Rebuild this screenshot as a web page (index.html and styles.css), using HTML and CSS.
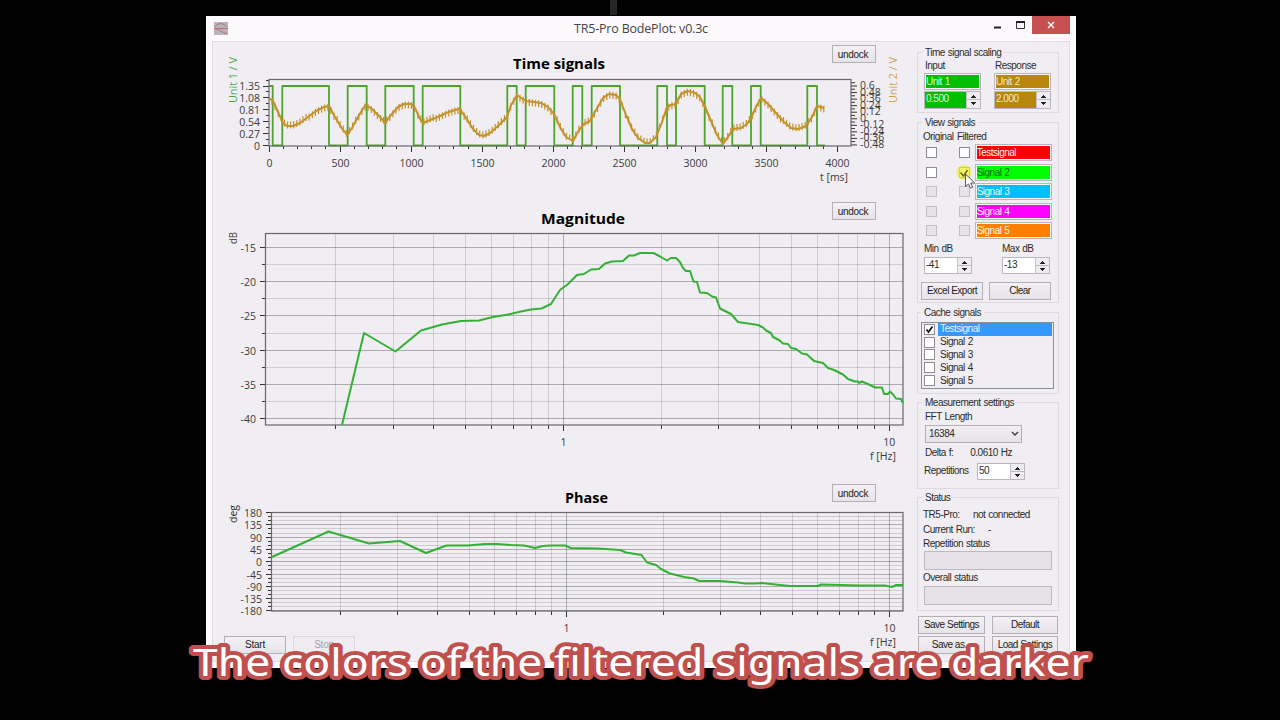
FILE: index.html
```html
<!DOCTYPE html>
<html lang="en">
<head>
    <meta charset="UTF-8">
    <title>TR5-Pro BodePlot: v0.3c</title>
    <link rel="stylesheet" href="styles.css">
</head>
<body>
    <div class="window">
        <header class="titlebar">
            <svg class="app-icon" width="14" height="13" viewBox="0 0 14 13">
                <rect width="14" height="13" fill="#b9b4b8"/>
                <path d="M0 6.5H14M1 5C4 .5 9 .5 13 5M1 6.5C5 7 8 11 13 11.5" fill="none" stroke="#b5707c"/>
            </svg>
            <h1>TR5-Pro BodePlot: v0.3c</h1>
            <div class="win-buttons">
                <svg width="38" height="19" viewBox="0 0 38 19">
                    <path d="M0 11.5h7" stroke="#222" stroke-width="2"/>
                    <path d="M22.5 6v6.5h8V6" fill="none" stroke="#333"/>
                    <path d="M22 6h9" stroke="#222" stroke-width="2"/>
                </svg>
                <div class="close">
                    <svg width="8" height="8" viewBox="0 0 8 8"><path d="M1 1l6 6M7 1l-6 6" stroke="#fff" stroke-width="1.4"/></svg>
                </div>
            </div>
        </header>

        <main class="client">
            <div class="charts">
                <section class="panel panel-time">
                    <svg id="time" viewBox="213 42 700 155"></svg>
                    <button class="undock">undock</button>
                </section>
                <section class="panel panel-mag">
                    <svg id="mag" viewBox="213 197 700 283"></svg>
                    <button class="undock">undock</button>
                </section>
                <section class="panel panel-phase">
                    <svg id="phase" viewBox="213 480 700 156"></svg>
                    <button class="undock">undock</button>
                </section>
                <div class="run-buttons">
                    <button>Start</button>
                    <button disabled>Stop</button>
                </div>
            </div>

            <aside class="sidebar">
                <div class="group scaling">
                    <h2>Time signal scaling</h2>
                    <div class="scaling-grid">
                        <label>Input</label>
                        <label>Response</label>
                        <div class="field green">Unit 1</div>
                        <div class="field gold">Unit 2</div>
                        <div class="spin green"><span>0.500</span><i></i></div>
                        <div class="spin gold"><span>2.000</span><i></i></div>
                    </div>
                </div>

                <div class="group view">
                    <h2>View signals</h2>
                    <div class="view-head"><span>Original</span><span>Filtered</span></div>
                    <div class="signal"><b class="check"></b><b class="check"></b><div class="field red">Testsignal</div></div>
                    <div class="signal"><b class="check"></b><b class="check"></b><div class="field lime">Signal 2</div></div>
                    <div class="signal"><b class="check off"></b><b class="check off"></b><div class="field blue">Signal 3</div></div>
                    <div class="signal"><b class="check off"></b><b class="check off"></b><div class="field magenta">Signal 4</div></div>
                    <div class="signal"><b class="check off"></b><b class="check off"></b><div class="field orange">Signal 5</div></div>
                    <div class="db-range">
                        <label>Min dB</label>
                        <label>Max dB</label>
                        <div class="spin"><span>-41</span><i></i></div>
                        <div class="spin"><span>-13</span><i></i></div>
                    </div>
                    <div class="view-buttons">
                        <button>Excel Export</button>
                        <button>Clear</button>
                    </div>
                </div>

                <div class="group cache">
                    <h2>Cache signals</h2>
                    <ul>
                        <li class="selected"><b class="check"><svg width="9" height="9" viewBox="0 0 9 9"><path d="M1.5 4.5l2 2.5 4-5.5" fill="none" stroke="#111" stroke-width="1.7"/></svg></b><span>Testsignal</span></li>
                        <li><b class="check"></b><span>Signal 2</span></li>
                        <li><b class="check"></b><span>Signal 3</span></li>
                        <li><b class="check"></b><span>Signal 4</span></li>
                        <li><b class="check"></b><span>Signal 5</span></li>
                    </ul>
                </div>

                <div class="group settings">
                    <h2>Measurement settings</h2>
                    <label>FFT Length</label>
                    <div class="select">16384
                        <svg width="8" height="6" viewBox="0 0 8 6"><path d="M1 1l3 3 3-3" fill="none" stroke="#444" stroke-width="1.5"/></svg>
                    </div>
                    <div class="row delta"><span>Delta f:</span><span>0.0610 Hz</span></div>
                    <div class="row reps"><span>Repetitions</span><div class="spin"><span>50</span><i></i></div></div>
                </div>

                <div class="group status">
                    <h2>Status</h2>
                    <div class="row tr5"><span>TR5-Pro:</span><span>not connected</span></div>
                    <div class="row current"><span>Current Run:</span><span>-</span></div>
                    <div class="row repetition">Repetition status</div>
                    <div class="progress"></div>
                    <div class="row overall">Overall status</div>
                    <div class="progress"></div>
                </div>

                <div class="file-buttons">
                    <button>Save Settings</button>
                    <button>Default</button>
                    <button>Save as...</button>
                    <button>Load Settings</button>
                </div>
            </aside>
        </main>
    </div>

    <div class="stub"></div>

    <svg class="pointer" width="30" height="30" viewBox="0 0 30 30">
        <circle cx="9" cy="8.500" r="7.5" fill="#f0ee30" fill-opacity=".7"/>
        <path d="M5.5 8.500l3 3.5 4-6" fill="none" stroke="#6f6a18" stroke-width="1.5"/>
        <path d="M10.500 10v12.500l3-2.600 2 4.300 2.200-1-2-4.200h4z" fill="#fff" stroke="#555"/>
    </svg>

    <svg class="caption" width="940" height="60" viewBox="170 640 940 60">
        <text x="193" y="676" textLength="896" lengthAdjust="spacingAndGlyphs">The colors of the filtered signals are darker</text>
    </svg>

    <script src="charts.js"></script>
</body>
</html>
```

FILE: styles.css
```css
* { box-sizing: border-box; }
body {
    margin: 0;
    height: 720px;
    overflow: hidden;
    background: #000;
    font: 10px/12px "Liberation Sans", Arial, sans-serif;
    letter-spacing: -0.25px;
    color: #2c2c2c;
}
h1, h2, ul { margin: 0; padding: 0; font-size: inherit; font-weight: normal; }

.window {
    width: 870px;
    height: 652px;
    margin: 16px 0 0 206px;
    padding: 0 6px 6px;
    background: #fdfafe;
}
.titlebar {
    display: grid;
    grid-template-columns: 110px 1fr 110px;
    height: 25px;
}
.app-icon { margin: 6px 0 0 2px; }
.titlebar h1 {
    padding-top: 4px;
    text-align: center;
    font: 12.500px/18px "Open Sans", sans-serif;
    letter-spacing: -0.2px;
    color: #444;
}
.win-buttons { display: flex; justify-content: flex-end; }
.close {
    display: flex;
    align-items: center;
    justify-content: center;
    width: 38px;
    height: 18px;
    background: #c75050;
}

.client {
    display: flex;
    height: 621px;
    background: #f0eef2;
    border: 1px solid #dfdce2;
}
.charts { width: 700px; }
.panel { display: grid; }
.panel > * { grid-area: 1 / 1; }
.panel > svg { display: block; width: 700px; overflow: visible; }
.panel-time > svg { height: 155px; }
.panel-mag > svg { height: 283px; }
.panel-phase > svg { height: 156px; }
.panel .undock {
    justify-self: end;
    width: 44px;
    height: 18px;
    margin: 3px 37px 0 0;
    padding: 1px 2px 0 0;
}
.panel-mag .undock { margin-top: 5px; }
.panel-phase .undock { margin-top: 4px; }

button {
    padding: 0;
    height: 18px;
    font: inherit;
    letter-spacing: inherit;
    color: #222;
    background: linear-gradient(#f3f1f4, #e6e4e8);
    border: 1px solid #b2b0b4;
}
button:disabled { color: #a5a3a7; background: #eeecf0; border-color: #dad8dc; }
.run-buttons { display: flex; gap: 7px; padding-left: 11px; }
.run-buttons button { width: 62px; }

/* chart parts */
svg text { font-family: "Open Sans", sans-serif; letter-spacing: 0; }
.frame { fill: none; stroke: #6a686d; stroke-width: 1.2; }
.tick { fill: none; stroke: #333; }
.grid { fill: none; stroke: #555; stroke-opacity: .22; }
.grid-major { fill: none; stroke: #444; stroke-opacity: .4; }
.lbl { font-size: 10.500px; fill: #3c3c3c; }
.title { font-size: 15px; font-weight: bold; fill: #000; }
.trace { fill: none; stroke: #35b036; stroke-width: 2; stroke-linejoin: round; }
.trace.square { stroke: #4ea32c; stroke-width: 1.8; }
.trace.response { stroke: #c3922a; stroke-width: 2; }
.trace.noise { stroke: #c3922a; stroke-width: 1.2; }

/* sidebar */
.sidebar { width: 142px; margin-left: 4px; padding-top: 10px; letter-spacing: -0.5px; word-spacing: 0.6px; }
.group {
    height: 61px;
    margin-bottom: 9px;
    padding: 0 6px;
    border: 1px solid #dcdadf;
}
.group h2 {
    width: max-content;
    margin: -6px 0 0 -2px;
    padding: 0 3px;
    background: #f0eef2;
}
.scaling-grid {
    display: grid;
    grid-template-columns: 57px 57px;
    column-gap: 13px;
    row-gap: 1px;
    padding-top: 1px;
}
.scaling-grid label { padding-left: 1px; }
.field {
    height: 17px;
    padding-left: 1px;
    line-height: 15px;
    color: #f2f5e8;
    border: 1px solid #b9b7bb;
    outline: 1px solid #f8f7f9;
    outline-offset: -2px;
}
.spin {
    display: flex;
    width: 57px;
    height: 17px;
    background: #fff;
    border: 1px solid #b9b7bb;
}
.spin span { flex: 1; padding-left: 1px; line-height: 14px; }
.spin i {
    width: 14px;
    border-left: 1px solid #c4c2c6;
    background:
        conic-gradient(from 135deg at 50% 0, transparent 0) 0 0 / 0 0 no-repeat,
        conic-gradient(from 135deg at 50% 0, #222 90deg, transparent 0) 4px 3px / 5px 3px no-repeat,
        conic-gradient(from -45deg at 50% 100%, #222 90deg, transparent 0) 4px 10px / 5px 3px no-repeat,
        linear-gradient(#efedf1 7px, #bbb 7px, #bbb 8px, #efedf1 8px);
}
.field.green, .spin.green { background-color: #00bf00; color: #dff5d8; }
.field.gold, .spin.gold { background-color: #b8860b; color: #f3e8cc; }
.scaling .spin { height: 18px; }
.red { background: #f00; }
.lime { background: #0f0; color: #1c6a1c; }
.blue { background: #00bfff; }
.magenta { background: #f0f; }
.orange { background: #ff8000; }

.view { height: 181px; }
.view-head { display: flex; gap: 4px; padding-top: 2px; margin-left: -1px; }
.view-head span:first-child { width: 30px; }
.signal { display: flex; align-items: center; height: 19.500px; padding-left: 2px; }
.signal .check { margin-right: 22px; }
.signal .check + .check { margin-right: 5px; }
.signal .field { width: 79px; }
.check {
    width: 11px;
    height: 11px;
    background: #fff;
    border: 1px solid #8e8c90;
}
.check.off { background: #e6e4e8; border-color: #c2c0c4; }
.check svg { display: block; }
.db-range {
    display: grid;
    grid-template-columns: 48px 48px;
    column-gap: 30px;
    row-gap: 2px;
    margin-top: 2px;
}
.db-range .spin { width: 48px; }
.view-buttons { display: flex; gap: 6px; margin: 8px 0 0 -3px; }
.view-buttons button { width: 62px; }

.cache { height: 82px; margin-bottom: 8px; padding-left: 3px; }
.cache h2 { margin-left: 0; }
.cache ul {
    width: 133px;
    height: 67px;
    margin-top: 3px;
    padding: 0 1px;
    list-style: none;
    border: 1px solid #8b8d99;
}
.cache li { display: flex; align-items: center; height: 12.800px; padding-left: 1px; }
.cache li span { flex: 1; height: 12px; margin-left: 3px; padding-left: 2px; }
.cache .selected span { background: #3399ff; color: #e3f2ff; height: 13px; }

.settings { height: 87px; margin-bottom: 8px; padding-left: 7px; }
.settings h2 { margin-left: -3px; }
.settings label { display: block; margin-top: 2px; }
.select {
    display: flex;
    justify-content: space-between;
    align-items: center;
    width: 97px;
    height: 18px;
    margin-top: 2px;
    padding: 0 2px 0 3px;
    background: linear-gradient(#f1eff3, #e5e3e7);
    border: 1px solid #b2b0b4;
}
.row { display: flex; height: 14.500px; white-space: nowrap; }
.delta { gap: 17px; margin-top: 4px; height: 15px; }
.reps { height: 17px; margin-left: -1px; padding-top: 1px; }
.reps > span { width: 53px; padding-top: 2px; }
.reps .spin { flex: none; width: 48px; }

.status { height: 114px; margin-bottom: 5px; padding-left: 5px; }
.status h2 { margin-left: -1px; }
.tr5 { margin-top: 5px; }
.tr5 span:first-child { width: 50px; }
.current span:first-child { width: 65px; }
.repetition { height: 13px; }
.progress { width: 128px; height: 19px; margin-left: 1px; background: #e5e3e7; border: 1px solid #bcbabe; }
.overall { margin-top: 2px; height: 14px; }

.file-buttons { display: grid; grid-template-columns: 67px 66px; gap: 2px 7px; margin-left: 1px; }

/* things lying over the window */
.stub { position: absolute; left: 610px; top: 0; width: 7px; height: 15px; background: #262626; }
.pointer { position: absolute; left: 955px; top: 164px; }
.caption { position: absolute; left: 170px; top: 640px; }
.caption text {
    font-family: "Noto Sans", sans-serif;
    font-size: 38px;
    fill: #fff;
    stroke: #c0504d;
    stroke-width: 8px;
    stroke-linejoin: round;
    paint-order: stroke;
}
```

FILE: charts.js
```js
const NS = "http://www.w3.org/2000/svg";

function add(svg, tag, attrs, text) {
    const el = document.createElementNS(NS, tag);
    for (const k in attrs) el.setAttribute(k, attrs[k]);
    if (text !== undefined) el.textContent = text;
    svg.appendChild(el);
    return el;
}
const path = (svg, cls, d) => add(svg, "path", { class: cls, d });
const line = (svg, cls, pts) => add(svg, "polyline", { class: "trace " + cls, points: pts });

function label(svg, x, y, text, anchor, cls) {
    add(svg, "text", { x, y, class: cls || "lbl", "text-anchor": anchor || "middle" }, text);
}
function fitted(svg, x, y, text, width, cls) {
    add(svg, "text", { x, y, class: cls, textLength: width, lengthAdjust: "spacingAndGlyphs" }, text);
}
function vertical(svg, x, y, text, width, color) {
    add(svg, "text", {
        x: 0, y: 0, class: "lbl", style: "fill:" + color, textLength: width,
        lengthAdjust: "spacingAndGlyphs", transform: `translate(${x} ${y}) rotate(-90)`
    }, text);
}
const snap = v => Math.round(v - 0.5) + 0.5;

// frequency axis with decade at x1 (1 Hz)
function logAxis(svg, x1, decade, left, top, bottom) {
    for (let e = -1; e <= 1; e++) {
        for (let m = 1; m < 10; m++) {
            const x = snap(x1 + decade * (e + Math.log10(m)));
            if (x <= left + 2 || x > 900) continue;
            path(svg, m === 1 ? "grid-major" : "grid", `M${x} ${top}V${bottom}`);
            path(svg, "tick", `M${x} ${bottom}v${m === 1 ? 6 : 4}`);
        }
    }
    label(svg, x1, bottom + 20.500, "1");
    label(svg, x1 + decade, bottom + 20.500, "10");
    fitted(svg, 870, bottom + 35, "f [Hz]", 26, "lbl");
}

// ---- time signals ----
const time = document.getElementById("time");
fitted(time, 513, 69, "Time signals", 92, "title");
for (let t = 0; t <= 4000; t += 100) {
    const x = snap(269 + t * 0.1422);
    path(time, "tick", `M${x} 146v${t % 500 ? 3 : 6}`);
    if (t % 500 === 0) label(time, x, 167, t);
}
["0", "0.27", "0.54", "0.81", "1.08", "1.35"].forEach((s, i) => {
    const y = 145.500 - i * 11.900;
    path(time, "tick", `M269 ${snap(y)}h-6`);
    label(time, 260, y + 4, s, "end");
    path(time, "tick", `M269 ${snap(y - 6)}h-3`);
});
["0.6", "0.48", "0.36", "0.24", "0.12", "0", "-0.12", "-0.24", "-0.36", "-0.48"].forEach((s, i) => {
    const y = 86 + i * 6.550;
    path(time, "tick", `M851 ${y}h6M851 ${y - 3.300}h4`);
    label(time, 860, y + 3, s, "start");
});
fitted(time, 820, 181, "t [ms]", 28, "lbl");
vertical(time, 237, 103, "Unit 1 / V", 46, "#4aa845");
vertical(time, 897, 103, "Unit 2 / V", 46, "#d0a04a");

const edges = [272.7, 282.3, 329, 347.7, 366.7, 385.3, 413.7, 422.7, 460.3, 507.3, 516.7, 525.7, 554.3,
    572.7, 582.3, 591.7, 620, 657.3, 667, 676, 704.7, 722.7, 732.3, 751, 760.7, 807.3, 817];
let sq = "269,86";
edges.forEach((x, i) => {
    sq += i % 2 ? ` ${x},145.3 ${x},86` : ` ${x},86 ${x},145.3`;
});
line(time, "square", sq + " 825,145.3");
add(time, "rect", { class: "frame", x: 269, y: 79.5, width: 582, height: 66.5 });

const resp = "269,98 273,101 278,112 283,123 287,126 293,126 300,123 308,117 316,111 324,107 329,106 335,117 341,127 347,135 352,128 358,117 364,107 366,105 372,109 380,117 385,123 391,115 398,107 404,104 411,104 415,108 420,119 423,123 430,120 438,117 446,113 455,110 460,109 466,118 473,129 479,135 484,136 490,133 498,126 507,117 511,105 517,95 521,98 526,101 534,102 541,103 548,107 554,114 560,127 566,137 573,141 579,130 584,124 590,121 596,110 603,98 609,94 616,95 620,99 626,115 632,129 638,138 645,143 650,143 656,137 662,122 667,107 671,105 676,104 681,94 688,91 695,93 700,97 705,107 711,121 717,135 723,144 728,137 733,129 741,128 747,124 751,118 756,107 761,98 768,104 776,113 784,122 791,128 798,129 806,126 812,117 817,106 824,108";
line(time, "response", resp);
const rp = resp.split(" ").map(p => p.split(",").map(Number));
let ripple = "";
for (let x = 272, k = 0; x < 824; x += 3.100) {
    while (rp[k + 1][0] < x) k++;
    const [ax, ay] = rp[k], [bx, by] = rp[k + 1];
    const y = ay + (by - ay) * (x - ax) / (bx - ax);
    // the ripple points down on the upper half, up on the lower half
    const from = y > 118 ? y - 4.500 : y - 2.500;
    ripple += `M${x.toFixed(1)} ${from.toFixed(1)}v${y > 138 ? 5 : 7}`;
}
path(time, "trace noise", ripple);

// ---- magnitude ----
const mag = document.getElementById("mag");
fitted(mag, 541, 224, "Magnitude", 84, "title");
for (let db = -15; db >= -40; db -= 2.5) {
    const y = snap(247.500 + (-15 - db) * 6.840);
    const major = db % 5 === 0;
    path(mag, major ? "grid-major" : "grid", `M266 ${y}H903`);
    path(mag, "tick", `M266 ${y}h${major ? -6 : -4}`);
    if (major) label(mag, 256, y + 4, db, "end");
}
logAxis(mag, 563.5, 325.8, 266, 233.5, 425);
add(mag, "rect", { class: "frame", x: 265.5, y: 233.5, width: 637.5, height: 191.5 });
vertical(mag, 237, 244, "dB", 12, "#444");
line(mag, "", "342,425 364,333 395.5,351.5 421,330.5 442,324.5 461,321 479,320.5 493,317 508,314.5 521,311.5 531,309.5 541.5,308.5 551,304 560,290 568,284 577,275 584,274 591,269.5 599,269 605,263.5 612,261.5 623,261 629,255.5 634,255.5 640,253 653.5,253 660,256.5 667,260.5 671,258 676,258 680,262 683,268 686,271 690,271 693.5,281.5 697,282 700,292.5 707,293 712,296.5 716,297.5 720,308.5 731,314 738,322 748,323.5 758,325 763,327.5 766,330.5 771,333 773,337 779,340 783,343.5 788,344 791,348 796,349 802,353.5 807,354.5 814,361 823,363 828,368 834,370 843,374.5 848,379 855,381.5 858,381.5 859,383 862,381.5 869,384.5 875,387.5 882,387.5 884,394 888,394 890,391.5 893,394.5 896,398.5 901,399 903,403");

// ---- phase ----
const phase = document.getElementById("phase");
fitted(phase, 565, 502.500, "Phase", 43, "title");
for (let deg = 180; deg >= -180; deg -= 15) {
    const y = snap(512.500 + (180 - deg) * 0.2736);
    const major = deg % 45 === 0;
    path(phase, major ? "grid-major" : "grid", `M272 ${y}H903`);
    path(phase, "tick", `M272 ${y}h${major ? -6 : -4}`);
    if (major) label(phase, 262, y + 4, deg, "end");
}
logAxis(phase, 566.5, 323, 272, 512.5, 611);
add(phase, "rect", { class: "frame", x: 271.5, y: 512.5, width: 631.5, height: 98.5 });
vertical(phase, 237, 523, "deg", 18, "#333");
line(phase, "", "272,557 328.5,531.5 369,543.5 400,541 426,553 446.5,545.5 468,545.5 485,544 498,544 511,545 524,545.5 535,548 543,546 550,545.5 565,545.5 571,548 598,548.5 620,550 626,552.5 641.5,555 647,562.5 656,565 661,569 670,573.5 684,577 694,578.5 699,581 720,581 738,582.5 745,583.5 755,583.5 762,583 780,585 790,586 818,586 821,584.5 860,585.5 885,585.5 892,587 896,585 903,585");
```
